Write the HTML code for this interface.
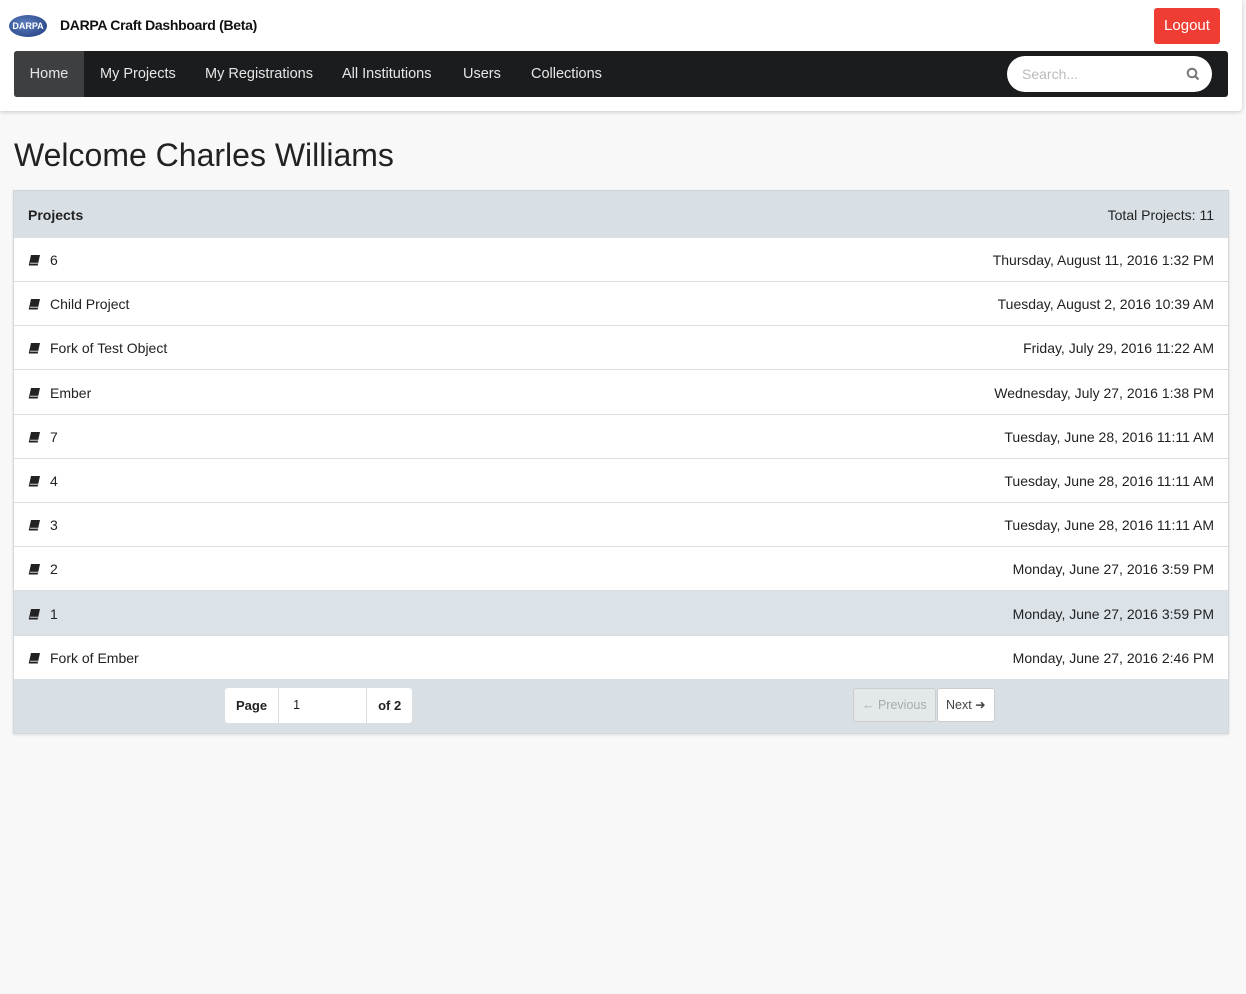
<!DOCTYPE html>
<html><head><style>
*{box-sizing:border-box;margin:0;padding:0}
body{width:1246px;height:994px;background:#f8f8f8;font-family:"Liberation Sans",Arial,sans-serif;color:#222;overflow:hidden;position:relative}
.hdr{position:absolute;left:0;top:0;width:1242px;height:111px;background:#fff;box-shadow:0 1px 4px rgba(0,0,0,.2);border-radius:0 0 4px 0}
.logo{position:absolute;left:9px;top:15px;width:38px;height:22px;border-radius:50%;background:radial-gradient(ellipse at 40% 40%,#5d7fc0,#1d3a7a);color:#fff;font-size:9px;font-weight:bold;text-align:center;line-height:22px}
.title{position:absolute;left:60px;top:17px;font-size:14px;font-weight:bold;color:#111;letter-spacing:-0.3px}
.logout{position:absolute;left:1154px;top:8px;width:66px;height:36px;background:#f03d33;border-radius:3px;color:#fff;font-size:15px;text-align:center;line-height:36px}
.nav{position:absolute;left:14px;top:51px;width:1214px;height:46px;background:#1b1c1e;border-radius:3px}
.nav span{position:absolute;top:0;line-height:46px;color:#e6e6e6;font-size:14.5px}
.home{left:0;width:70px;background:#3e3f41;text-align:center;border-radius:3px 0 0 3px}
.search{position:absolute;left:993px;top:5px;width:205px;height:36px;background:#fff;border-radius:18px;color:#bbb;font-size:14px;line-height:36px;padding-left:15px}
h1{position:absolute;left:14px;top:137px;font-size:32px;font-weight:normal;color:#222}
.card{position:absolute;left:13px;top:190px;width:1216px;height:544px;background:#fff;border:1px solid #d0d6db;box-shadow:0 1px 3px rgba(0,0,0,.1)}
.row{position:absolute;left:0;width:1214px;border-bottom:1px solid #ddd;font-size:14px;color:#222}
.row .l{position:absolute;left:14px;top:1px}
.row .r{position:absolute;right:14px;top:1px}
.ph{background:#d8e0e6;font-weight:bold}
.ph .r{font-weight:normal}
.ic{display:inline-block;width:12px;height:11px;margin-right:10px;vertical-align:-1px}
.foot{position:absolute;left:0;top:488px;width:1214px;height:54px;background:#d8e0e6}
.pg{position:absolute;left:211px;top:9px;height:35px;background:#fff;border-radius:3px;font-size:13px;display:flex}
.pg div{line-height:35px;padding:0 11px;border-right:1px solid #ddd}
.btn{position:absolute;top:9px;height:34px;border:1px solid #ccc;border-radius:3px;font-size:12.5px;line-height:32px;padding:0 8px;color:#444;background:#fff}
</style></head><body>
<div class="hdr">
<div class="logo">DARPA</div>
<div class="title">DARPA Craft Dashboard (Beta)</div>
<div class="logout">Logout</div>
<div class="nav">
<span class="home">Home</span>
<span style="left:86px">My Projects</span>
<span style="left:191px">My Registrations</span>
<span style="left:328px">All Institutions</span>
<span style="left:449px">Users</span>
<span style="left:517px">Collections</span>
<div class="search">Search...<svg style="position:absolute;right:12px;top:11px" width="14" height="14" viewBox="0 0 14 14"><circle cx="6" cy="6" r="4.3" fill="none" stroke="#777" stroke-width="2"/><path d="M9 9l3.5 3.5" stroke="#777" stroke-width="2.2"/></svg></div>
</div>
</div>
<h1>Welcome Charles Williams</h1>
<div class="card">
<div class="row ph" style="top:0;height:47px;line-height:46px"><span class="l">Projects</span><span class="r">Total Projects: 11</span></div>
<div id="rows"></div>
<div class="foot">
<div class="pg"><div style="font-weight:bold">Page</div><div style="width:88px;font-size:12.5px;padding-left:14px">1</div><div style="font-weight:bold;border:none">of 2</div></div>
<div class="btn" style="left:839px;background:#e3e8eb;color:#aaa">&#8592; Previous</div>
<div class="btn" style="left:923px">Next &#10140;</div>
</div>
</div>
<script>
var d=[["6","Thursday, August 11, 2016 1:32 PM"],["Child Project","Tuesday, August 2, 2016 10:39 AM"],["Fork of Test Object","Friday, July 29, 2016 11:22 AM"],["Ember","Wednesday, July 27, 2016 1:38 PM"],["7","Tuesday, June 28, 2016 11:11 AM"],["4","Tuesday, June 28, 2016 11:11 AM"],["3","Tuesday, June 28, 2016 11:11 AM"],["2","Monday, June 27, 2016 3:59 PM"],["1","Monday, June 27, 2016 3:59 PM"],["Fork of Ember","Monday, June 27, 2016 2:46 PM"]];
var h="",ic='<svg class="ic" viewBox="0 0 12 11"><path d="M3 0h9l-2 9H1z" fill="#222"/><path d="M1 9h9l-0.3 1.5H0.7z" fill="#222"/><path d="M2 8.2h8" stroke="#fff" stroke-width=".8"/></svg>';
for(var i=0;i<10;i++){var t=46+i*44.2;h+='<div class="row" style="top:'+t+'px;height:45px;line-height:44px;'+(i==8?'background:#dbe3e9':'')+'"><span class="l">'+ic+d[i][0]+'</span><span class="r">'+d[i][1]+'</span></div>';}
document.getElementById("rows").innerHTML=h;
</script>
</body></html>
